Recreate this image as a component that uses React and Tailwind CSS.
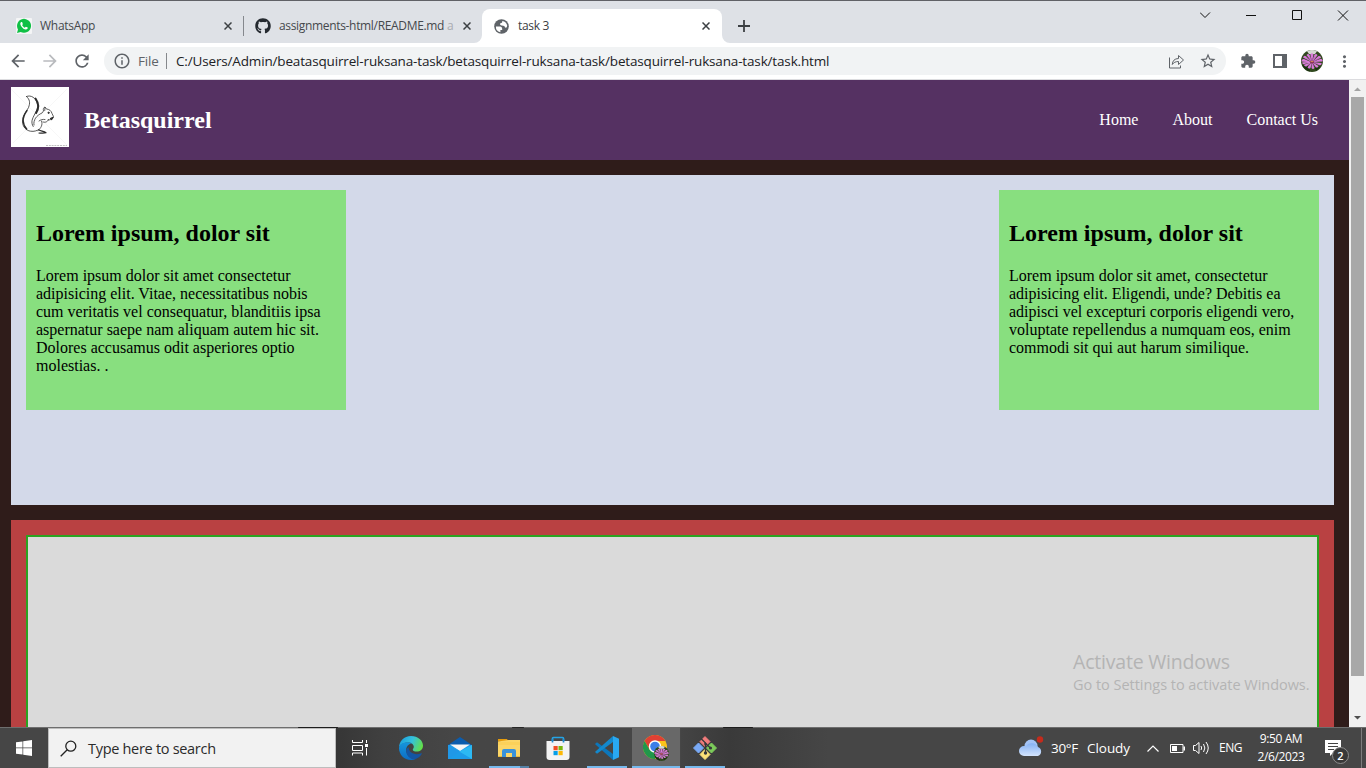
import React from "react";
import {
  MdArrowBack,
  MdArrowForward,
  MdRefresh,
  MdOutlineInfo,
  MdStarBorder,
  MdExtension,
  MdMoreVert,
} from "react-icons/md";
import { FaGithub } from "react-icons/fa";

function CloseX() {
  return (
    <svg className="size-[8px] shrink-0" viewBox="0 0 8 8">
      <path d="M0.5 0.5L7.5 7.5M7.5 0.5L0.5 7.5" stroke="#3c4043" strokeWidth="1.5" />
    </svg>
  );
}

function Globe() {
  return (
    <svg className="size-[15px] shrink-0" viewBox="0 0 15 15">
      <circle cx="7.500" cy="7.500" r="7.300" fill="#5f6368" />
      <path d="M1.900 7.500h4.400q1.900.2 1.900 2.200v1.200H6.400v2.400A5.700 5.700 0 0 1 1.900 7.500z" fill="#fff" />
      <path d="M8.300 1.900q4.200.8 4.900 4.700-.2 1.800-1.100 2.200-1.300 0-1.600-1.500-.8-.6-2.900-.8-1.500-.2-1.600-1.200 0-1.100 1.400-1.200 1-.2.900-2.200z" fill="#fff" />
    </svg>
  );
}

function WhatsApp() {
  return (
    <svg className="size-4 shrink-0" viewBox="0 0 16 16">
      <rect width="16" height="16" rx="1" fill="#f4f5f6" />
      <path d="M1 15l1-3.6A7 7 0 1 1 4.700 14z" fill="#10c046" />
      <path
        d="M5.200 4c-1.200.7-1.200 2.300 0 4.200 1.400 2.200 3.500 3.600 5 3.300 1.200-.2 1.800-1.200 1.500-1.900l-1.900-.9-1 1.100C7.600 9.300 6.600 8.300 6.100 7.100l.8-.9L6.100 4.100z"
        fill="#fff"
      />
    </svg>
  );
}

function Squirrel() {
  return (
    <svg className="h-[60px] w-[58px] shrink-0 bg-white" viewBox="0 0 58 60" fill="none">
      <path d="M0 2L56 58M56 2L2 56" stroke="#f5f5f5" strokeWidth="0.8" />
      <g stroke="#2c2c2c" strokeLinecap="round" strokeLinejoin="round">
        <path d="M15.500 9.500C20 7.500 25 11 26.500 17c.8 4-1 6.500-2.700 10-2.500 5-4.300 8-1.600 12.500" strokeWidth="0.800" />
        <path d="M24.500 11.500c3.200 4.500 3.700 9.500.6 14.500" strokeWidth="2" />
        <path d="M15.500 9.500c3.500 3 3.800 6.500 2 11-2.500 5-6.500 8.500-6 14.500.4 5 3.500 8.500 8 9.200 3.500.6 6.500-.5 8.500-1.700" strokeWidth="0.800" />
        <path d="M16 23.500c-2.500 3.500-4 6.500-3.800 10.500.2 3.500 1.500 6 3.500 8" strokeWidth="1.400" />
        <path d="M23 38c-1-5 2.500-9.500 8-12l1.500-2c-.5-2.200 0-3.500 1.500-4l1.400 2c3 .2 5 2 5.600 4.500l1.500 3c-.5 2.500-2.500 3.500-5.500 3.500" strokeWidth="0.750" />
        <path d="M34 20.500l-.3 3M32 35c3 1 5-.8 5.500-2.500M30.500 34c1.500 4-.5 7-3.500 9.500M34 32.500c-2.500-.5-4.500.3-6 1.500" strokeWidth="0.750" />
        <path d="M39.500 31.500l2.500-1.200-1.500 2.300M28 43c2 1.300 5 1 7 2.800-2 .6-5 .3-7 .2" strokeWidth="1.200" />
        <circle cx="37.500" cy="25.800" r=".6" fill="#222" />
      </g>
      <path d="M35 58.500h21" stroke="#c0c0c0" strokeWidth="1" strokeDasharray="2 .8" />
    </svg>
  );
}

function Flower({ className }) {
  return (
    <svg className={className} viewBox="0 0 22 22">
      <circle cx="11" cy="11" r="11" fill="#31491f" />
      <path d="M6 1.200a11 11 0 0 1 10 0L14 4 8 4z" fill="#d5d9d3" />
      <path d="M1 15l7 1 1 5.500A11 11 0 0 1 1 15zM14 18l6-2-5 5z" fill="#1b3210" />
      <g fill="#d97bd9">
        <path d="M11 12.500L.3 11.500Q.5 8.500 3 9zM11 12L2 7.500Q3 4.800 5 6.300zM11 12L5.500 5Q7 3 8.500 4.800zM11 12L9.300 4.300Q11 2.300 12.500 4.300zM11 12L13.500 4.500Q15.500 3 16.500 5.200zM11 12L17.500 6Q20 5.500 20 7.800zM11 12L20 8.800Q22.300 9.500 21.500 11.500zM11 12L20.500 13Q21 15.500 18.500 15.200zM11 12L17.500 16Q17 18.300 14.800 17.300zM11 12L13.500 18Q12 20 10.500 18zM11 12L9.500 18Q7.500 19.300 6.500 17.300zM11 12L5.500 16.500Q3 16.800 3 14.800zM11 12L2.500 14.200Q.8 13.500 1.500 12.300z" />
      </g>
      <path d="M10 11L5 7.500M10.500 10L8.500 6M11.500 10L14 6M12.500 11L18 8.500M13 12.500L17 14M11.500 13L12.500 16.500M10 13L7 15.500" stroke="#b44fb5" strokeWidth=".6" />
      <ellipse cx="11" cy="11.900" rx="2.200" ry="1.500" fill="#8a3456" />
      <path d="M9.700 11.500h2.600" stroke="#e09a61" strokeWidth=".8" />
    </svg>
  );
}

function TabStrip() {
  return (
    <div className="flex h-[43px] items-end border-t border-[#606166] bg-[#dee1e6] text-[12px] tracking-[-0.2px] text-[#45484c]">
      <div className="flex h-[34px] w-[243px] items-center pr-[11px] pl-4">
        <WhatsApp />
        <span className="ml-2 flex-1 tracking-[-0.28px]">WhatsApp</span>
        <CloseX />
      </div>
      <div className="mb-[7px] h-5 w-px bg-[#85888d]" />
      <div className="flex h-[34px] w-[238px] items-center pr-[11px] pl-[11px]">
        <FaGithub className="size-4 shrink-0 text-[#24292f]" />
        <span className="ml-2 whitespace-nowrap tracking-[-0.33px]">
          assignments-html/README.md <span className="text-[#a9acb1]">a</span>
        </span>
        <span className="ml-auto flex">
          <CloseX />
        </span>
      </div>
      <svg className="-ml-2 h-[34px] w-2 shrink-0" viewBox="0 0 8 34">
        <path d="M8 26v8H0a8 8 0 0 0 8-8" fill="#fff" />
      </svg>
      <div className="flex h-[34px] w-[240px] items-center rounded-t-lg bg-white pr-3 pl-3">
        <Globe />
        <span className="ml-[9px] flex-1 tracking-[-0.3px] text-[#3c4043]">task 3</span>
        <CloseX />
      </div>
      <svg className="h-[34px] w-2 shrink-0" viewBox="0 0 8 34">
        <path d="M0 26v8h8a8 8 0 0 1-8-8" fill="#fff" />
      </svg>
      <svg className="mb-[11px] ml-2 size-3 shrink-0" viewBox="0 0 12 12">
        <path d="M6 0v12M0 6h12" stroke="#3c4043" strokeWidth="1.800" />
      </svg>
      <svg className="mt-2 ml-auto h-[12px] w-[150px] shrink-0 self-start" viewBox="0 0 150 12" fill="none" stroke="#111">
        <path d="M0 3.500L5 8.500L10 3.500" strokeWidth="1" />
        <path d="M46 6.500h10" />
        <path d="M92.500 1.500h9v9h-9z" />
        <path d="M138 1.500l10 10M148 1.500l-10 10" />
      </svg>
      <div className="w-4 shrink-0" />
    </div>
  );
}

function Toolbar() {
  return (
    <div className="flex h-[37px] items-center border-b border-[#dcdcdf] bg-white text-[#5f6368]">
      <MdArrowBack className="ml-[8px] size-5" />
      <MdArrowForward className="ml-3 size-5 text-[#b9bbbe]" />
      <MdRefresh className="ml-3 size-5" />
      <div className="ml-3 flex h-7 w-[1122px] items-center rounded-full bg-[#f1f3f4] text-[14px]">
        <MdOutlineInfo className="ml-[9px] size-[18px]" />
        <span className="ml-[7px] w-[22px] text-[13.500px] tracking-[-0.2px]">File</span>
        <span className="ml-[6px] h-4 w-px bg-[#85888c]" />
        <span className="ml-[9px] flex-1 text-[13.500px] tracking-[-0.157px] whitespace-nowrap text-[#202124]">
          C:/Users/Admin/beatasquirrel-ruksana-task/betasquirrel-ruksana-task/betasquirrel-ruksana-task/task.html
        </span>
        <svg className="h-[15px] w-[16px]" viewBox="0 0 16 15" fill="none" stroke="#5f6368" strokeWidth="1">
          <path d="M.5 3.500v10.500h11v-2.500M3.300 10.500C3.500 6.800 5.500 4.600 9.500 4.500V1.500L14.500 6l-5 4.500V7.500C6.500 7.500 4.700 8.500 3.300 10.500z" />
        </svg>
        <MdStarBorder className="mr-[9px] ml-[14px] size-[18px]" />
      </div>
      <MdExtension className="ml-[14px] size-4" />
      <svg className="ml-[17px] h-[14px] w-[14px]" viewBox="0 0 14 14">
        <path d="M0 0h14v14H0zM2 2v10h7V2z" fill="#5f6368" fillRule="evenodd" />
      </svg>
      <Flower className="ml-[14px] size-[22px]" />
      <MdMoreVert className="ml-3 size-[19px]" />
    </div>
  );
}

function Card({ title, children }) {
  return (
    <article className="h-[220px] w-[320px] bg-[#88df7f] p-[10px]">
      <h2 className="my-5 text-[24px] leading-[27px] font-bold">{title}</h2>
      <p className="text-[16px] leading-[18px]">{children}</p>
    </article>
  );
}

function Page() {
  return (
    <div className="flex h-[647px] overflow-hidden">
      <main className="w-[1349px] bg-[#2f1c1a] font-['Liberation_Serif',serif] text-black">
        <header className="flex h-20 items-center bg-[#553162] pr-[31px] pb-[6px] pl-[11px] text-white">
          <Squirrel />
          <h1 className="mt-[7px] ml-[15px] text-[24px] leading-[27px] font-bold">Betasquirrel</h1>
          <nav className="mt-[6px] ml-auto flex gap-[34px] text-[16px] leading-[18px]">
            <span>Home</span>
            <span>About</span>
            <span>Contact Us</span>
          </nav>
        </header>
        <section className="mt-[15px] mr-[15px] ml-[11px] flex h-[330px] items-start justify-between bg-[#d3d9e9] p-[15px]">
          <Card title="Lorem ipsum, dolor sit">
            Lorem ipsum dolor sit amet consectetur adipisicing elit. Vitae, necessitatibus nobis cum veritatis vel
            consequatur, blanditiis ipsa aspernatur saepe nam aliquam autem hic sit. Dolores accusamus odit asperiores
            optio molestias. .
          </Card>
          <Card title="Lorem ipsum, dolor sit">
            Lorem ipsum dolor sit amet, consectetur adipisicing elit. Eligendi, unde? Debitis ea adipisci vel excepturi
            corporis eligendi vero, voluptate repellendus a numquam eos, enim commodi sit qui aut harum similique.
          </Card>
        </section>
        <section className="mt-[15px] mr-[15px] ml-[11px] h-[240px] bg-[#b94142] px-[15px] pt-[15px]">
          <div className="flex h-[240px] flex-col items-end border-2 border-[#2ba321] bg-[#dadada] pt-[111px] pr-[7px] font-['Open_Sans',sans-serif] text-[#b4b4b4]">
            <div className="w-[237px] whitespace-nowrap">
              <p className="text-[19.500px] leading-[27px] tracking-[-0.2px]">Activate Windows</p>
              <p className="text-[14.500px] leading-5 tracking-[-0.03px]">Go to Settings to activate Windows.</p>
            </div>
          </div>
        </section>
      </main>
      <div className="flex w-[17px] flex-col items-center bg-[#f1f1f1]">
        <svg className="h-[17px] w-[17px] shrink-0" viewBox="0 0 17 17">
          <path d="M5 11L8.500 7.500L12 11z" fill="#a3a3a3" />
        </svg>
        <div className="h-[579px] w-[13px] bg-[#a8a8a8]" />
        <svg className="mt-auto mb-[1px] h-[17px] w-[17px] shrink-0" viewBox="0 0 17 17">
          <path d="M5 7L8.500 10.500L12 7z" fill="#505050" />
        </svg>
      </div>
    </div>
  );
}

function Edge() {
  return (
    <svg className="size-6" viewBox="0 0 24 24">
      <defs>
        <linearGradient id="edgeTop" x1="0" y1="0.300" x2="1" y2="0.600">
          <stop offset="0" stopColor="#1ba0df" />
          <stop offset=".5" stopColor="#35c1dc" />
          <stop offset="1" stopColor="#64e045" />
        </linearGradient>
        <linearGradient id="edgeSide" x1="0" y1="0" x2="0" y2="1">
          <stop offset="0" stopColor="#1596dc" />
          <stop offset="1" stopColor="#0d6cc4" />
        </linearGradient>
      </defs>
      <path d="M0 12C0 5 5 0 12 0s12 4.500 12 9.500c0 4-3 6-6.200 6-2.600 0-4-.8-4-1.800 0-.8 1-1.200 1-2.900C14.800 8.500 12.500 6.500 9 6.500 4 6.500 0 9 0 12z" fill="url(#edgeTop)" />
      <path d="M0 12C.3 8.500 4 6.300 8.500 6.300c3 0 4.500 1 4.500 1C9 8 7.200 11 7.200 14c0 5 4 9 9.300 9.200A12 12 0 0 1 12 24C5 24 0 18.500 0 12z" fill="url(#edgeSide)" />
      <path d="M9.500 11C8 12.500 7.200 13.500 7.200 15c0 5 4.500 8.500 9 8.300 2.800-1 5-3 6.500-5.300.4-.7-.1-1-.6-.8-6 2.600-12.500-.5-12.600-6.200z" fill="#1455a3" />
    </svg>
  );
}

function Mail() {
  return (
    <svg className="h-6 w-6" viewBox="0 0 24 24">
      <path d="M0 9L12 1l12 8z" fill="#0b5cad" />
      <path d="M0 9h24v14H0z" fill="#1d9ce9" />
      <path d="M2 8.500h20L12 15z" fill="#f5f5f5" />
      <path d="M0 9l12 6.300L24 9v14z" fill="#2cb9f3" />
      <path d="M0 9l12 6.300L0 23z" fill="#2098e8" />
    </svg>
  );
}

function Explorer() {
  return (
    <svg className="h-6 w-[22px]" viewBox="0 0 22 24">
      <path d="M0 3h9l1.500 2.500H0z" fill="#e69c0c" />
      <path d="M0 5.500L10.500 4H22v17H0z" fill="#fcd667" />
      <path d="M0 6h22v3H0z" fill="#fbd15a" />
      <path d="M4 21v-6q0-2 2-2h10q2 0 2 2v6h-4v-4H8v4z" fill="#3992da" />
      <path d="M0 20h4v1H0zM18 20h4v1h-4z" fill="#e7b93f" />
    </svg>
  );
}

function Store() {
  return (
    <svg className="h-6 w-6" viewBox="0 0 24 24">
      <path d="M6.500 6V2.500q0-1 1-1h9q1 0 1 1V6" fill="none" stroke="#25a4e6" strokeWidth="1.700" />
      <path d="M.5 5h23v16q0 3-3 3h-17q-3 0-3-3z" fill="#f3f3f3" />
      <path d="M6.500 3v3.500M17.500 3v3.500" stroke="#1e8dd1" strokeWidth="1.700" />
      <path d="M7.500 10h4.200v4.200H7.500z" fill="#f04e23" />
      <path d="M12.500 10h4.200v4.200h-4.200z" fill="#7bb90b" />
      <path d="M7.500 15h4.200v4.200H7.500z" fill="#069fe8" />
      <path d="M12.500 15h4.200v4.200h-4.200z" fill="#fdb805" />
    </svg>
  );
}

function VsCode() {
  return (
    <svg className="size-6" viewBox="0 0 24 24">
      <path d="M0 8l2-1.800L18 18v6L1 9z" fill="#0c77bb" />
      <path d="M0 16l2 1.800L18 6V0L1 15z" fill="#1389ce" />
      <path d="M18 0l6 2.700v18.600L18 24z" fill="#29a8f1" />
    </svg>
  );
}

function Chrome() {
  return (
    <span className="flex size-[26px]">
      <svg className="h-6 w-6 shrink-0" viewBox="0 0 24 24">
        <circle cx="12" cy="12" r="12" fill="#fbc31b" />
        <path d="M1.600 6A12 12 0 0 1 22.400 6H12L6.800 15z" fill="#df4034" />
        <path d="M1.600 6A12 12 0 0 0 12 24l5.200-9-10.400 0z" fill="#21974b" />
        <circle cx="12" cy="11.500" r="6.200" fill="#fff" />
        <circle cx="12" cy="11.500" r="4.800" fill="#3a7fe8" />
      </svg>
      <Flower className="mt-[11px] -ml-[13px] size-[15px] shrink-0" />
    </span>
  );
}

function GitBash() {
  return (
    <svg className="size-6" viewBox="0 0 24 24">
      <g strokeWidth="1" strokeLinejoin="round">
        <path d="M12 .6l5 5-5 5-5-5z" fill="#f17c7c" stroke="#f17c7c" />
        <path d="M5.500 7l5 5-5 5-5-5z" fill="#79a9f5" stroke="#79a9f5" />
        <path d="M18.500 7l5 5-5 5-5-5z" fill="#7ccb5a" stroke="#7ccb5a" />
        <path d="M12 13.500l5 5-5 5-5-5z" fill="#fde178" stroke="#fde178" />
      </g>
      <path d="M8 2.500L12.500 7v11M12.500 7.500l5 4.500" stroke="#35383a" strokeWidth="1.200" fill="none" />
      <circle cx="12.500" cy="8" r="1.300" fill="#35383a" />
      <circle cx="17.500" cy="12" r="1.600" fill="#35383a" />
      <circle cx="12.500" cy="17" r="1.700" fill="#35383a" />
    </svg>
  );
}

function AppButton({ children, bar, active }) {
  return (
    <div className={"flex h-full w-12 flex-col items-center " + (active ? "bg-[#686868]" : "")}>
      <div className="flex h-[38px] items-center pt-[2px]">{children}</div>
      {bar}
    </div>
  );
}

function TaskbarEdge() {
  return (
    <div className="flex h-px bg-[#6e6e6e]">
      <div className="ml-[298px] h-px w-10 rounded-full bg-[#1d1d1d]" />
      <div className="ml-[174px] h-px w-3 rounded-full bg-[#262626]" />
      <div className="ml-[199px] h-px w-[30px] rounded-full bg-[#1d1d1d]" />
    </div>
  );
}

function Taskbar() {
  const bar = <div className="h-[2px] w-10 bg-[#76b9ed]" />;
  return (
    <footer className="h-[41px]">
      <TaskbarEdge />
      <div className="flex h-10 items-stretch bg-[#464646] text-white">
        <div className="flex w-12 items-center justify-center">
          <svg className="size-4" viewBox="0 0 16 16" fill="#fff">
            <path d="M0 2.300L6.500 1.400v6.200H0zM7.200 1.300L16 0v7.600H7.200zM0 8.300h6.500v6.300L0 13.700zM7.200 8.300H16V16l-8.800-1.300z" />
          </svg>
        </div>
        <div className="flex w-72 items-center border border-[#bdbdbd] bg-[#f2f2f2] pl-[11px] text-[#2b2b2b]">
          <svg className="size-[17px]" viewBox="0 0 17 17" fill="none" stroke="#222" strokeWidth="1.300">
            <circle cx="10.800" cy="6.200" r="5" />
            <path d="M7.200 9.800L.7 16.300" />
          </svg>
          <span className="mt-px ml-[11px] text-[14.500px] tracking-[-0.3px]">Type here to search</span>
        </div>
        <div className="flex w-12 items-center justify-center bg-linear-to-r from-[#363636] to-[#404040]">
          <svg className="size-4" viewBox="0 0 16 16" fill="none" stroke="#fff">
            <path d="M.5 0v2.500h10V0M.5 5.500h10v5H.5zM.5 15.500V13h10v2.500M14.500 0v3M14.500 8v7.500" />
            <path d="M13 4h3v3h-3z" fill="#fff" stroke="none" />
          </svg>
        </div>
        <div className="flex gap-px bg-linear-to-r from-[#404040] via-[#464646] via-20% to-[#464646] pl-[3px]">
          <AppButton><Edge /></AppButton>
          <AppButton><Mail /></AppButton>
          <AppButton
            bar={
              <div className="flex h-[2px] w-10">
                <div className="w-[31px] bg-[#76b9ed]" />
                <div className="w-[9px] bg-[#5481a6]" />
              </div>
            }
          >
            <Explorer />
          </AppButton>
          <AppButton><Store /></AppButton>
          <AppButton bar={bar}><VsCode /></AppButton>
          <AppButton active bar={<div className="h-[2px] w-12 bg-[#76b9ed]" />}><Chrome /></AppButton>
          <div className="flex bg-linear-to-r from-[#444444] to-[#3a3a3a]">
            <AppButton bar={bar}><GitBash /></AppButton>
          </div>
        </div>
        <div className="w-[100px] bg-linear-to-r from-[#3a3a3a] to-[#464646]" />
        <div className="ml-auto flex w-[347px] items-center">
          <svg className="-mt-1 h-[21px] w-[26px]" viewBox="0 0 26 21">
            <defs>
              <linearGradient id="cloud" x1="0" y1="0" x2="0" y2="1">
                <stop offset="0" stopColor="#84b1f4" />
                <stop offset="1" stopColor="#d4e4fc" />
              </linearGradient>
            </defs>
            <circle cx="12" cy="10" r="6.500" fill="#a3c3f6" />
            <path d="M5 20a5 5 0 0 1 0-10q1-.2 2 .2A7 7 0 0 1 19 11a4.800 4.800 0 0 1 0 9z" fill="url(#cloud)" />
            <circle cx="21" cy="3.500" r="3.200" fill="#c42b1c" />
          </svg>
          <span className="mt-px ml-[6px] w-[36px] text-[13.500px] tracking-[-0.3px]">30°F</span>
          <span className="mt-px w-[60px] text-[13.500px] tracking-[-0.05px]">Cloudy</span>
          <svg className="h-[7px] w-3" viewBox="0 0 12 7" fill="none" stroke="#fff" strokeWidth="1.200">
            <path d="M.5 6.500L6 1l5.500 5.500" />
          </svg>
          <svg className="ml-[11px] h-[9px] w-[15px]" viewBox="0 0 15 9">
            <path d="M.5.5h12.500v8H.5z" fill="none" stroke="#fff" />
            <path d="M2 2h5v5H2zM13.500 2.500H15v4h-1.500z" fill="#fff" />
          </svg>
          <svg className="ml-2 h-[14px] w-[17px]" viewBox="0 0 17 14" fill="none" stroke="#fff">
            <path d="M.5 4.500h2L6 1.500v11L2.500 9.500h-2zM8 5q1.300 2 0 4M10.500 3q2.700 4 0 8M13 1q4.500 6 0 12" />
          </svg>
          <span className="ml-[9px] w-[25px] text-[12px] tracking-[-0.5px]">ENG</span>
          <span className="ml-2 flex w-[58px] flex-col items-center text-[12px] leading-[18px] tracking-[-0.4px] whitespace-nowrap">
            <span>9:50 AM</span>
            <span>2/6/2023</span>
          </span>
          <span className="relative -mt-[2px] ml-[15px] h-[14px] w-4">
            <svg className="h-[16px] w-4" viewBox="0 0 16 16">
              <path d="M0 0h16v13H8l-3 3v-3H0z" fill="#fff" />
              <path d="M3 3.500h10M3 6.500h10M3 9.500h6" stroke="#444" />
            </svg>
            <span className="absolute top-[7px] left-[7px] flex size-[17px] items-center justify-center rounded-full border border-[#8c8c8c] bg-[#383838] text-[11px] leading-none font-semibold">
              2
            </span>
          </span>
          <span className="mr-1 ml-auto h-10 w-px bg-[#7c7c7c]" />
        </div>
      </div>
    </footer>
  );
}

export default function App() {
  return (
    <div className="flex h-[768px] w-[1366px] flex-col overflow-hidden bg-white font-['Open_Sans',sans-serif]">
      <TabStrip />
      <Toolbar />
      <Page />
      <Taskbar />
    </div>
  );
}
